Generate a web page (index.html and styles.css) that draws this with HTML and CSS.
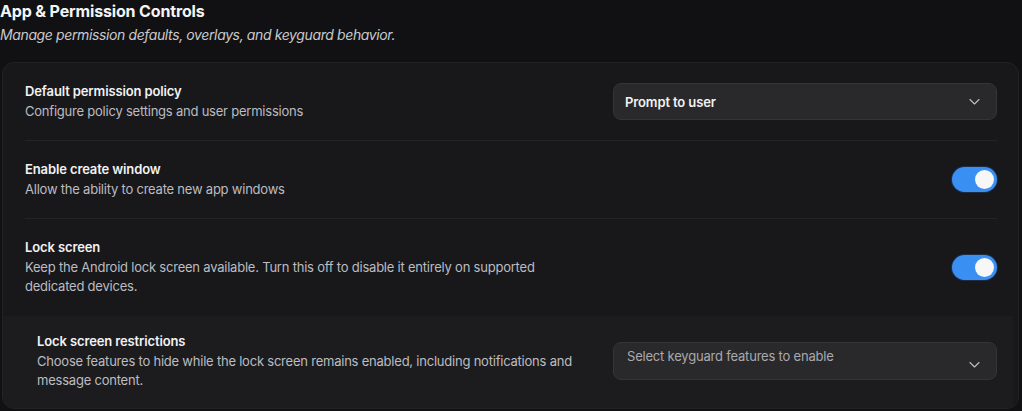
FILE: index.html
```html
<!DOCTYPE html>
<html lang="en">
<head>
<meta charset="utf-8">
<title>App &amp; Permission Controls</title>
<link rel="stylesheet" href="styles.css">
</head>
<body>
<div class="page">
  <h1 class="title">App &amp; Permission Controls</h1>
  <p class="subtitle">Manage permission defaults, overlays, and keyguard behavior.</p>
  <div class="card">
    <div class="row">
      <div class="text">
        <div class="label">Default permission policy</div>
        <div class="desc">Configure policy settings and user permissions</div>
      </div>
      <div class="select">
        <span class="value">Prompt to user</span>
        <svg class="chev" width="13" height="13" viewBox="0 0 13 13"><path d="M2 4.5 L6.5 9 L11 4.5" fill="none" stroke="#bdbdc2" stroke-width="1.1" stroke-linecap="round" stroke-linejoin="round"/></svg>
      </div>
    </div>
    <div class="row">
      <div class="text">
        <div class="label">Enable create window</div>
        <div class="desc">Allow the ability to create new app windows</div>
      </div>
      <div class="toggle"><span class="knob"></span></div>
    </div>
    <div class="row last">
      <div class="text">
        <div class="label">Lock screen</div>
        <div class="desc">Keep the Android lock screen available. Turn this off to disable it entirely on supported dedicated devices.</div>
      </div>
      <div class="toggle"><span class="knob"></span></div>
    </div>
    <div class="sub">
      <div class="text">
        <div class="label">Lock screen restrictions</div>
        <div class="desc">Choose features to hide while the lock screen remains enabled, including notifications and message content.</div>
      </div>
      <div class="select placeholder">
        <span class="value">Select keyguard features to enable</span>
        <svg class="chev" width="13" height="13" viewBox="0 0 13 13"><path d="M2 4.5 L6.5 9 L11 4.5" fill="none" stroke="#bdbdc2" stroke-width="1.1" stroke-linecap="round" stroke-linejoin="round"/></svg>
      </div>
    </div>
  </div>
</div>
</body>
</html>
```
FILE: styles.css
```css
* { box-sizing: border-box; }
html, body {
  margin: 0;
  background: #111113;
  font-family: Inter, "Noto Sans", "Liberation Sans", sans-serif;
  color: #f2f2f3;
}
.page {
  padding: 0 3px 0 0;
}
.title {
  margin: 0;
  padding-top: 1px;
  font-size: 16px;
  line-height: 20px;
  font-weight: 700;
  color: #f4f4f5;
  letter-spacing: -0.15px;
}
.subtitle {
  margin: 5px 0 0 0;
  font-size: 14px;
  line-height: 18px;
  font-style: italic;
  color: #c9c9cd;
  letter-spacing: -0.38px;
}
.card {
  margin: 18px 0 0 2px;
  background: #18181b;
  border: 1px solid #222225;
  border-radius: 12px;
  padding: 0 21px 0 22px;
  overflow: hidden;
}
.row {
  display: flex;
  align-items: center;
  justify-content: space-between;
  padding: 19px 0;
  border-bottom: 1px solid #242427;
}
.row.last { border-bottom: none; padding-bottom: 20px; }
.text { flex: 0 0 auto; max-width: 560px; }
.label {
  font-size: 13px;
  line-height: 18px;
  font-weight: 600;
  color: #f2f2f3;
  letter-spacing: -0.12px;
}
.desc {
  margin-top: 2px;
  font-size: 13px;
  line-height: 19px;
  color: #bcbcc1;
  letter-spacing: -0.22px;
}
.select {
  width: 384px;
  height: 37px;
  background: #29292c;
  border: 1px solid #353538;
  border-radius: 8px;
  display: flex;
  align-items: center;
  justify-content: space-between;
  padding: 0 15px 0 11px;
}
.select .value {
  font-size: 13px;
  font-weight: 600;
  color: #f2f2f3;
  letter-spacing: -0.12px;
}
.select.placeholder {
  height: 38px;
  align-items: flex-start;
  padding-top: 5px;
  padding-left: 13px;
}
.select.placeholder .value {
  font-weight: 400;
  color: #a9a9ae;
  letter-spacing: -0.2px;
}
.select.placeholder .chev { margin-top: 10px; }
.toggle {
  width: 45px;
  height: 25px;
  border-radius: 13px;
  background: #3a8ff3;
  box-shadow: 0 0 0 1px #1d2d44;
  position: relative;
  flex: 0 0 auto;
}
.knob {
  position: absolute;
  top: 3px;
  right: 3px;
  width: 19px;
  height: 19px;
  border-radius: 50%;
  background: #f7f7f8;
}
.sub {
  margin: 0 -16px 0 -22px;
  padding: 16px 16px 18px 34px;
  background: #1c1c1f;
  display: flex;
  align-items: center;
  justify-content: space-between;
}
```
